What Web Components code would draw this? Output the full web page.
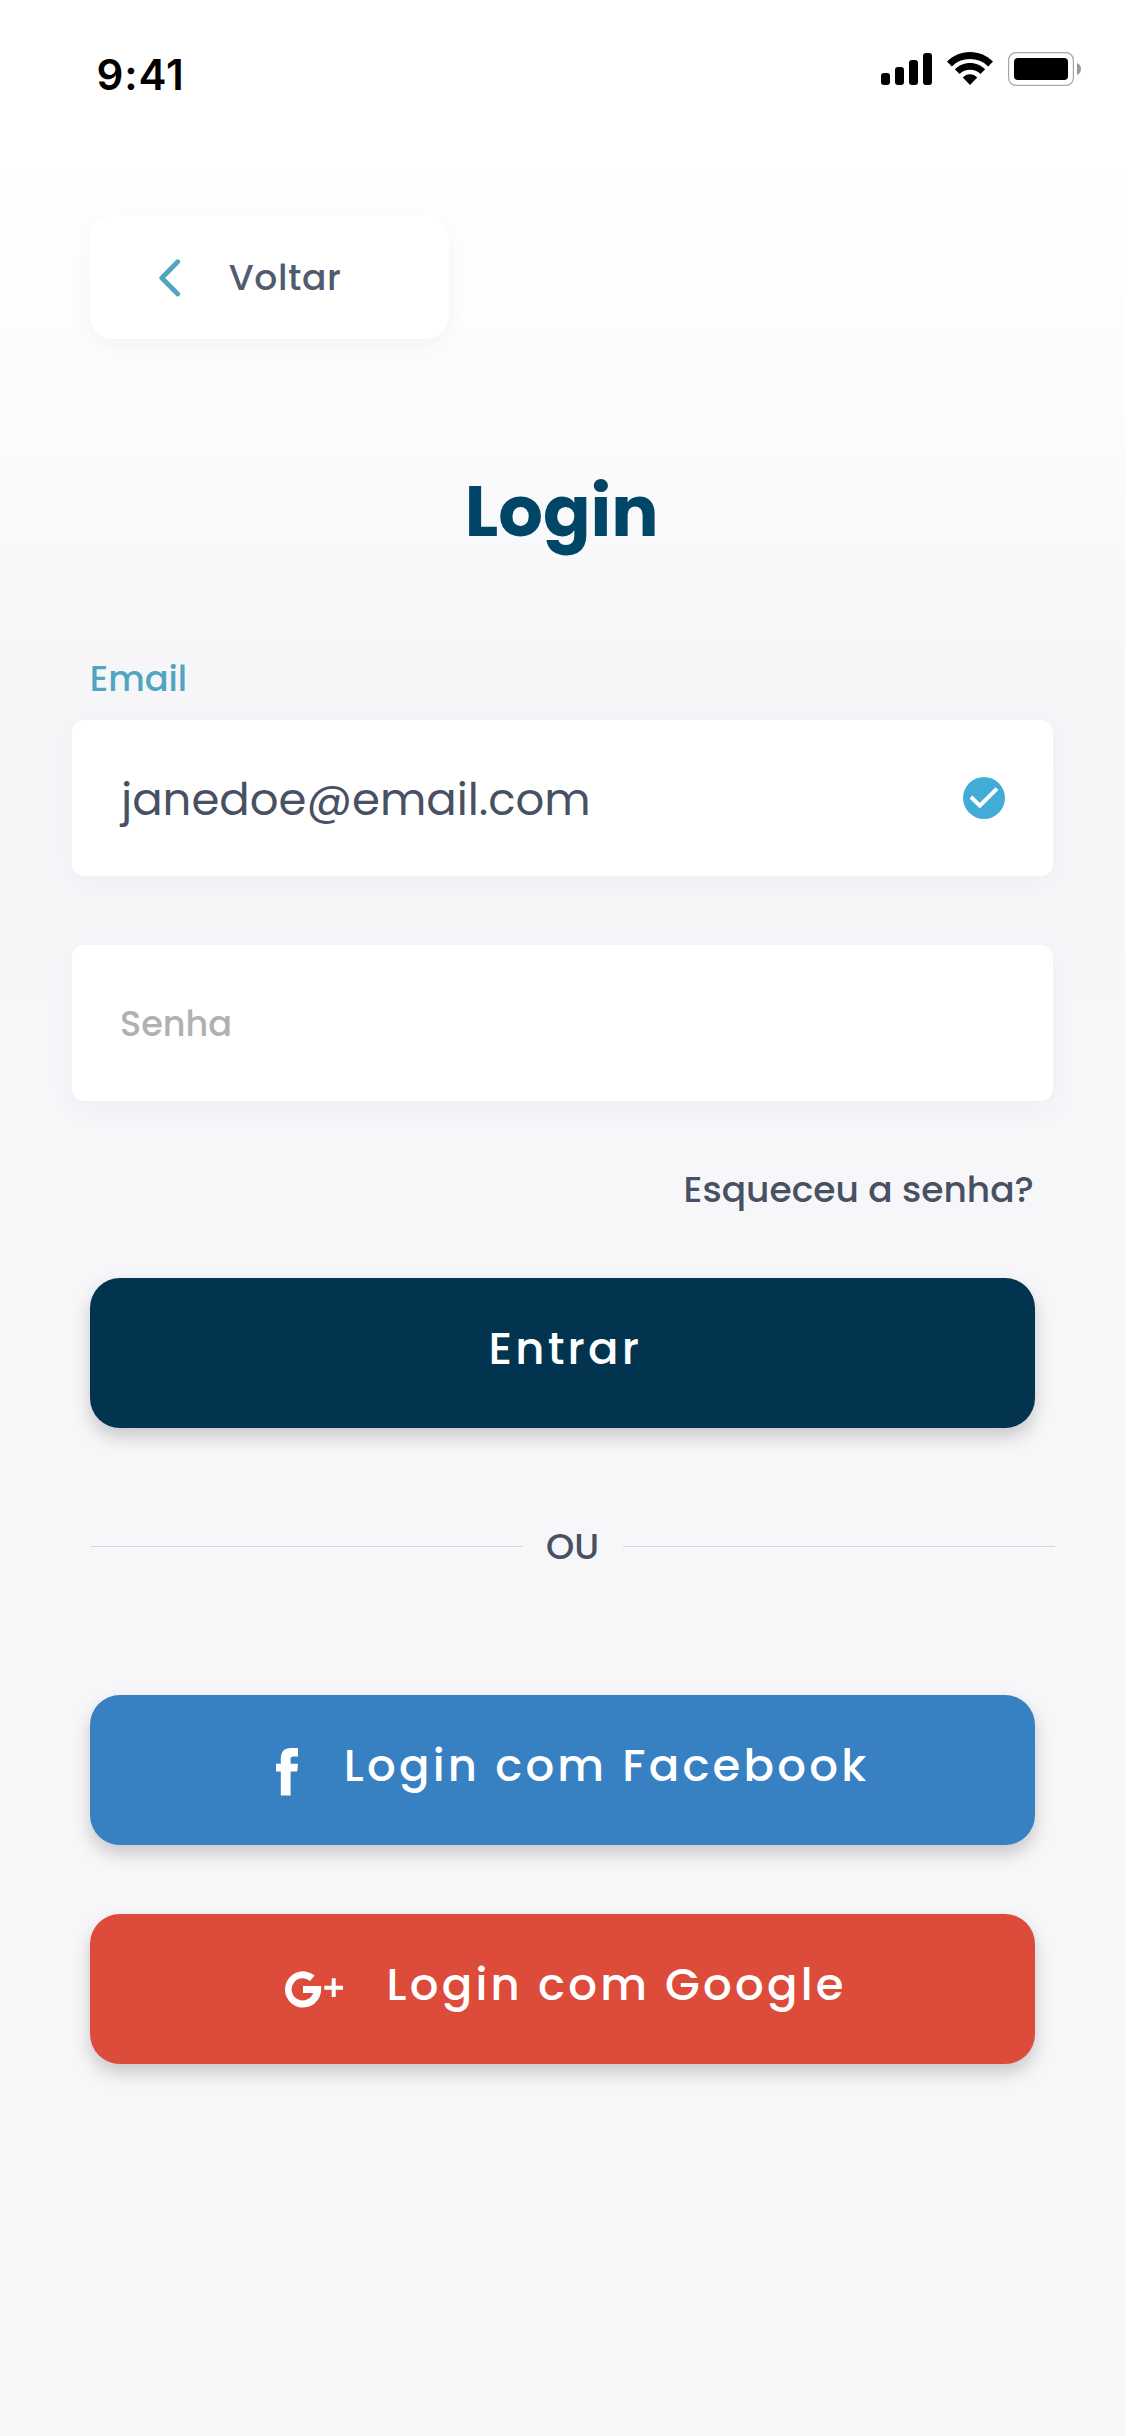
<!DOCTYPE html>
<html lang="pt-BR">
<head>
<meta charset="utf-8">
<title>Login</title>
<style>
  html, body { margin: 0; padding: 0; }
  body {
    width: 1125px; height: 2436px; overflow: hidden;
    font-family: Poppins, Inter, "Open Sans", sans-serif;
  }
</style>
</head>
<body>
<login-screen></login-screen>
<script>
const define = (name, html) => {
  const tpl = document.createElement('template');
  tpl.innerHTML = html;
  customElements.define(name, class extends HTMLElement {
    constructor() {
      super();
      this.attachShadow({ mode: 'open' }).appendChild(tpl.content.cloneNode(true));
    }
  });
};

define('text-line', `
  <style>:host { display: block; white-space: nowrap; flex: none; }</style><slot></slot>`);

define('status-bar', `
  <style>
    :host { display: flex; justify-content: space-between; align-items: flex-start; height: 215px; box-sizing: border-box; padding: 50px 44px 0 96px; color: #000; }
    .time { font: 600 42px/50px Inter, sans-serif; letter-spacing: .8px; margin-left: .6px; }
    svg { display: block; margin-top: 2px; }
  </style>
  <text-line class="time">9:41</text-line>
  <svg width="200" height="34" viewBox="881 52 200 34">
    <rect x="881" y="73" width="9" height="12" rx="3"/>
    <rect x="895" y="67" width="9" height="18" rx="3"/>
    <rect x="909" y="60" width="9" height="25" rx="3"/>
    <rect x="923" y="53" width="9" height="32" rx="3"/>
    <path d="M970 52C961 52 953 55.6 947 61.6L951.8 66.4A25.8 25.8 0 0 1 988.2 66.4L993 61.6C987 55.6 979 52 970 52Z"/>
    <path d="M970 62.9C964 62.9 958.8 65.3 954.8 69.2L959.6 74A15 15 0 0 1 980.4 74L985.2 69.2C981.2 65.3 976 62.9 970 62.9Z"/>
    <path d="M970 74.3C967.3 74.3 964.7 75.5 962.8 77.6L970 85L977.2 77.6C975.3 75.5 972.7 74.3 970 74.3Z"/>
    <rect x="1008.6" y="52.6" width="64.8" height="32.8" rx="7.5" fill="none" stroke="#a6a6a6" stroke-width="1.2"/>
    <rect x="1014" y="58" width="54" height="22" rx="4"/>
    <path d="M1077 63C1079.5 64 1081 66.3 1081 69S1079.5 74 1077 75Z" fill="#999"/>
  </svg>`);

define('back-button', `
  <style>
    :host { display: flex; align-items: center; width: 359px; height: 124px; margin-left: 90px; box-sizing: border-box; padding-left: 69.4px; gap: 47.4px; border-radius: 23px; background: #fff; box-shadow: 0 7px 22px rgba(50,80,110,.055); color: #505b70; font-size: 36px; font-weight: 500; line-height: 41px; letter-spacing: .6px; }
    svg { display: block; margin-top: 2px; }
    text-line { padding-top: 1px; }
  </style>
  <svg width="22" height="38" viewBox="0 0 22 38"><path d="M18.7 2.8L2.800 19L18.7 35" fill="none" stroke="#52a5bf" stroke-width="4.8" stroke-linecap="round" stroke-linejoin="round"/></svg>
  <text-line>Voltar</text-line>`);

define('text-field', `
  <style>
    :host { display: flex; align-items: center; justify-content: space-between; width: 981px; height: 156px; margin-left: 72px; box-sizing: border-box; padding: 0 48px; border-radius: 12px; background: #fff; box-shadow: 0 7px 24px rgba(60,85,130,.05); }
  </style><slot></slot><slot name="icon"></slot>`);

define('check-badge', `
  <style>:host { display: block; width: 42px; height: 42px; } svg { display: block; }</style>
  <svg width="42" height="42" viewBox="0 0 42 42"><circle cx="21" cy="21" r="21" fill="#43acd6"/><path d="M8 20L16.8 28.6L34 11.6" fill="none" stroke="#fff" stroke-width="4"/></svg>`);

define('action-button', `
  <style>
    :host { display: flex; align-items: center; width: 945px; height: 150px; margin-left: 90px; box-sizing: border-box; padding-bottom: 9px; border-radius: 30px; color: #fff; background: var(--fill); font-size: 45px; font-weight: 500; line-height: 61px; letter-spacing: 3.23px; box-shadow: 0 9px 18px rgba(0,0,0,.19); }
  </style><slot name="icon"></slot><slot></slot>`);

define('facebook-icon', `
  <style>:host { display: block; margin: 13px 0 0 186px; } svg { display: block; }</style>
  <svg width="22" height="48" viewBox="0 0 22 48" fill="#fff"><path d="M4.8 47.5V23.5H0V15.7H4.8V11C4.8 3.6 8.3 0 15 0H22V8.4H17.5C15.2 8.4 14.6 9.2 14.6 11.2V15.7H22L21.2 23.5H14.6V47.5Z"/></svg>`);

define('google-plus-icon', `
  <style>:host { display: block; margin: 10px 0 0 195px; } svg { display: block; }</style>
  <svg width="58" height="37" viewBox="0 0 58 37">
    <path d="M18 15H36.2V18.2A18.1 18.1 0 1 1 29.6 4.5L25 9.9A11.1 11.1 0 1 0 28.2 22H18Z" fill="#fff"/>
    <path d="M39.3 16.7H58M48.7 7.2V26" stroke="#fff" stroke-width="4" fill="none"/>
  </svg>`);

define('or-divider', `
  <style>
    :host { display: flex; align-items: center; justify-content: space-between; height: 41px; margin: 0 70px 0 91px; color: #475163; font-size: 36px; font-weight: 500; line-height: 41px; }
    .rule { height: 1px; width: 432px; background: #d6d7da; flex: none; }
    text-line { margin-right: 1px; }
  </style><div class="rule"></div><text-line><slot></slot></text-line><div class="rule"></div>`);

define('login-screen', `
  <style>
    :host { display: flex; flex-direction: column; align-items: stretch; height: 2436px; background: linear-gradient(#fff 0, #fff 165px, #fcfcfc 410px, #f9f9fb 540px, #f6f6f9 690px, #f7f7fa 1000px); }
    .title { margin: 127px 0 0 464.7px; font-size: 70.2px; font-weight: 700; line-height: 91px; color: #024667; }
    .label { margin: 101px 0 21px 89.7px; font-size: 35.2px; font-weight: 500; line-height: 41px; color: #52a5bf; }
    .value { margin-left: 1px; font-size: 45px; line-height: 61px; padding-top: 3px; color: #475163; }
    .hint { padding-top: 1px; font-size: 35.1px; font-weight: 500; line-height: 41px; color: #b1b1b1; }
    .password { margin-top: 69px; }
    .forgot { margin: 68px 0 68px 683.6px; font-size: 36px; font-weight: 500; line-height: 41px; color: #475163; }
    .enter { --fill: #02344f; margin-bottom: 98px; }
    .enter text-line { margin-left: 398.4px; }
    .facebook { --fill: #3780c1; margin-top: 128px; }
    .facebook text-line { margin-left: 45.8px; }
    .google { --fill: #dd4c3a; margin-top: 69px; }
    .google text-line { margin-left: 43.6px; }
  </style>
  <status-bar></status-bar>
  <back-button></back-button>
  <text-line class="title">Login</text-line>
  <text-line class="label">Email</text-line>
  <text-field><text-line class="value">janedoe@email.com</text-line><check-badge slot="icon"></check-badge></text-field>
  <text-field class="password"><text-line class="hint">Senha</text-line></text-field>
  <text-line class="forgot">Esqueceu a senha?</text-line>
  <action-button class="enter"><text-line>Entrar</text-line></action-button>
  <or-divider>OU</or-divider>
  <action-button class="facebook"><facebook-icon slot="icon"></facebook-icon><text-line>Login com Facebook</text-line></action-button>
  <action-button class="google"><google-plus-icon slot="icon"></google-plus-icon><text-line>Login com Google</text-line></action-button>`);
</script>
</body>
</html>
